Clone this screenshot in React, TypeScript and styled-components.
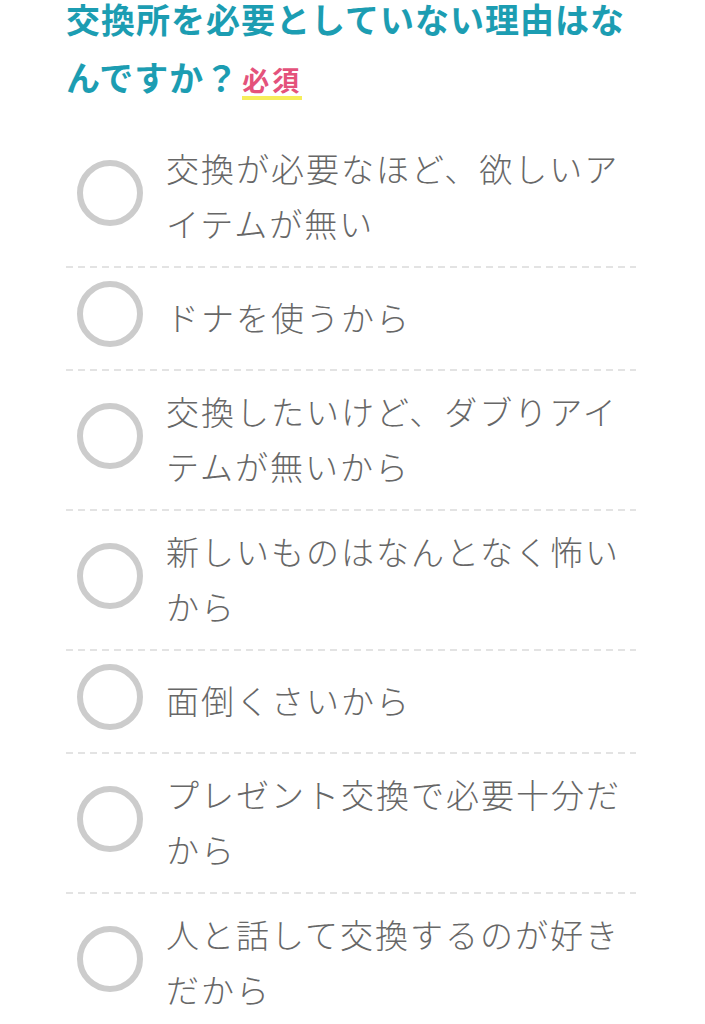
import * as React from "react";
import styled, { createGlobalStyle } from "styled-components";

const GlobalStyle = createGlobalStyle`
  html, body {
    margin: 0;
    padding: 0;
    background: #ffffff;
  }
  body {
    font-family: "Noto Sans CJK JP", "Noto Sans", sans-serif;
  }
`;

const Page = styled.div`
  width: 570px;
  padding-left: 66px;
  overflow: hidden;
`;

const Question = styled.h2`
  margin: -10px 0 20px 0;
  font-size: 34px;
  font-weight: 700;
  letter-spacing: 1px;
  line-height: 58px;
  color: #1c9db2;
`;

const Required = styled.span`
  display: inline-block;
  margin-left: 3px;
  font-size: 27px;
  font-weight: 700;
  letter-spacing: 3px;
  line-height: 1;
  color: #e4527b;
  padding-bottom: 3px;
  border-bottom: 4px solid #f6ee5a;
`;

const List = styled.div`
  display: flex;
  flex-direction: column;
`;

const Option = styled.label`
  display: flex;
  align-items: center;
  padding: 15px 0;
  cursor: pointer;

  & + & {
    background-image: repeating-linear-gradient(
      90deg,
      #e3e3e3 0 7px,
      transparent 7px 12px
    );
    background-size: 100% 2px;
    background-repeat: no-repeat;
    background-position: top left;
  }
`;

const Radio = styled.span`
  flex-shrink: 0;
  box-sizing: border-box;
  width: 66px;
  height: 66px;
  margin: 0 23px 7px 11px;
  border: 6px solid #cccccc;
  border-radius: 50%;
`;

const Label = styled.span`
  font-size: 33px;
  font-weight: 300;
  letter-spacing: 2px;
  line-height: 55px;
  color: #676767;
`;

const options = [
  "交換が必要なほど、欲しいアイテムが無い",
  "ドナを使うから",
  "交換したいけど、ダブりアイテムが無いから",
  "新しいものはなんとなく怖いから",
  "面倒くさいから",
  "プレゼント交換で必要十分だから",
  "人と話して交換するのが好きだから",
];

const App: React.FC = () => {
  return (
    <Page>
      <GlobalStyle />
      <Question>
        交換所を必要としていない理由はなんですか？<Required>必須</Required>
      </Question>
      <List>
        {options.map((text) => (
          <Option key={text}>
            <Radio />
            <Label>{text}</Label>
          </Option>
        ))}
      </List>
    </Page>
  );
};

export default App;
